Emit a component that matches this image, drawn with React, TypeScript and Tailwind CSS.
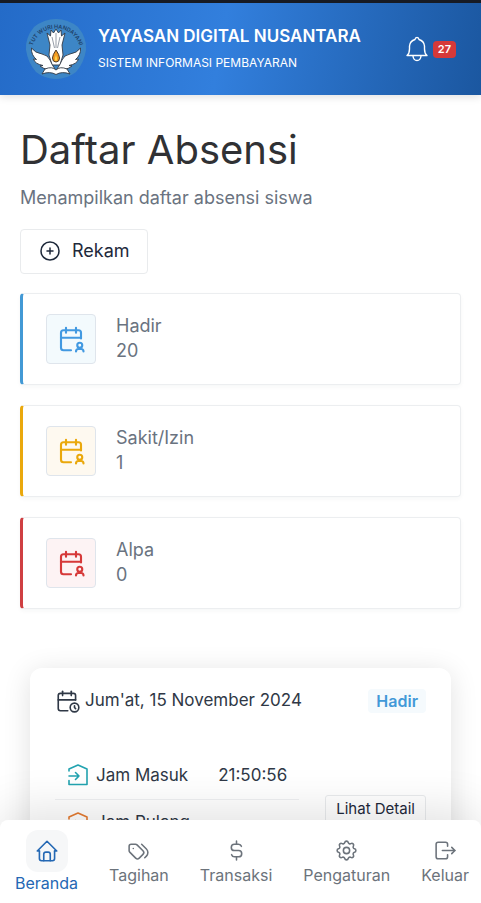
import type { ReactNode } from "react";
import {
  TbCalendarTime,
  TbCalendarUser,
  TbCirclePlus,
  TbCurrencyDollar,
  TbHome,
  TbLogout,
  TbSettings,
  TbTags,
} from "react-icons/tb";

function Emblem() {
  return (
    <svg viewBox="0 0 64 64" className="size-16 shrink-0" role="img" aria-label="Tut Wuri Handayani">
      <path
        d="M32 2Q44 2 54 10Q63 21 62 33Q60 46 52 55Q43 62 32 62Q21 62 12 55Q4 46 2 33Q1 21 10 10Q20 2 32 2Z"
        fill="#3d86c6"
      />
      <path id="motto" d="M8 31A24.500 24.500 0 0 1 56 31" fill="none" />
      <text fontSize="5.500" fontWeight="600" fill="#1d3f66" fontFamily="Inter, sans-serif">
        <textPath href="#motto" startOffset="50%" textAnchor="middle">
          TUT WURI HANDAYANI
        </textPath>
      </text>
      <g fill="#fff" stroke="#333a44" strokeWidth="0.900" strokeLinejoin="round">
        <path d="M25 38L26 28L23 16L26.500 19L27 13L29.500 16L32 12L34.500 16L37 13L37.500 19L41 16L38 28L39 38L36 48H28Z" />
        <path d="M31 52Q22 54 16 49L19 48.500Q11 47 9.500 42L12.500 42.500Q7 38 7.500 31Q11 36 18 37Q24 38 26 43Q28 48 31 52Z" />
        <path d="M33 52Q42 54 48 49L45 48.500Q53 47 54.500 42L51.500 42.500Q57 38 56.500 31Q53 36 46 37Q40 38 38 43Q36 48 33 52Z" />
        <path d="M18 57L21 52Q28 49 32 53Q36 49 43 52L46 57Q38 54 32 57.500Q26 54 18 57Z" />
      </g>
      <path d="M28 20L30.500 31M36 20L33.500 31M32 16V31" stroke="#7b8490" strokeWidth="0.800" />
      <path d="M32 33Q35.500 38 35.500 41Q35.500 45 32 45Q28.500 45 28.500 41Q28.500 38 32 33Z" fill="#f39a20" stroke="#4b3a28" strokeWidth="1" />
      <path d="M32 38Q33.500 41 33 43.500H31Q30.500 41 32 38Z" fill="#ffd54a" />
    </svg>
  );
}

function BellIcon() {
  return (
    <svg
      viewBox="0 0 24 26"
      className="h-[26px] w-6"
      fill="none"
      stroke="currentColor"
      strokeWidth="1.400"
      strokeLinecap="round"
      strokeLinejoin="round"
      aria-hidden="true"
    >
      <path d="M2 19.500Q4.500 17.500 4.500 13V10Q5 5 10 3.500Q10.200 1.500 12 1.500T14 3.500Q19 5 19.500 10V13Q19.500 17.500 22 19.500Z" />
      <path d="M8 20Q8.500 24.500 12 24.500T16 20" />
    </svg>
  );
}

function GateIcon({ className }: { className: string }) {
  return (
    <svg
      viewBox="0 0 22 24"
      className={`h-6 w-[22px] shrink-0 ${className}`}
      fill="none"
      stroke="currentColor"
      strokeWidth="1.600"
      strokeLinecap="round"
      strokeLinejoin="round"
      aria-hidden="true"
    >
      <path d="M2 8V6L11 2L20 6V21.500H2V17.500" />
      <path d="M2 13H12M8.500 9.500L12 13L8.500 16.500" />
    </svg>
  );
}

type Tone = { bar: string; tile: string };

const tones: Record<string, Tone> = {
  blue: { bar: "border-l-[#4299d5]", tile: "bg-[#f3fafd] text-[#4299e1]" },
  yellow: { bar: "border-l-[#eaa80c]", tile: "bg-[#fef9f0] text-[#eaa80c]" },
  red: { bar: "border-l-[#cf3f42]", tile: "bg-[#fdf3f4] text-[#d63939]" },
};

function StatCard({ label, value, tone }: { label: string; value: number; tone: Tone }) {
  return (
    <section
      className={`flex h-[92px] items-center gap-5 rounded-[4px] border border-l-[3px] border-[#eceef0] bg-white px-[23px] shadow-[0_2px_4px_rgba(30,41,59,0.04)] ${tone.bar}`}
    >
      <div className={`flex size-[50px] items-center justify-center rounded-[4px] border border-[#dfe5ec] ${tone.tile}`}>
        <TbCalendarUser size={30} strokeWidth={1.7} aria-hidden="true" />
      </div>
      <div className="pb-0.5 text-lg leading-[25px] text-[#6a7380]">
        <p>{label}</p>
        <p>{value}</p>
      </div>
    </section>
  );
}

function NavItem({ icon, label, active }: { icon: ReactNode; label: string; active?: boolean }) {
  return (
    <a
      href="#"
      aria-current={active ? "page" : undefined}
      className={`flex flex-col items-center ${active ? "pb-2.5 text-[#2468b4]" : "pb-[18px] text-[#6c737b]"}`}
    >
      <span className={active ? "mb-px rounded-xl bg-[#f6f7f8] p-2" : "mb-0.5"}>{icon}</span>
      <span className="text-base leading-5">{label}</span>
    </a>
  );
}

export default function App() {
  return (
    <div className="flex h-screen flex-col overflow-hidden bg-white font-[Inter,sans-serif]">
      <header className="relative z-10 flex h-[95px] shrink-0 items-center justify-between border-t-[3px] border-[#171b24] bg-[linear-gradient(100deg,#246bc8_0%,#327fdd_46%,#1b57a0_100%)] pr-[25px] pl-6 text-white shadow-[0_2px_8px_rgba(0,0,0,0.12)]">
        <div className="flex items-center gap-2.5">
          <Emblem />
          <div>
            <h2 className="text-[17px] leading-6 font-semibold">YAYASAN DIGITAL NUSANTARA</h2>
            <p className="mt-[3px] text-xs leading-6">SISTEM INFORMASI PEMBAYARAN</p>
          </div>
        </div>
        <button type="button" aria-label="27 notifikasi" className="flex items-center gap-1">
          <BellIcon />
          <span className="rounded-[4px] bg-[#d63939] px-[5px] text-[11px] leading-[17px] font-semibold">27</span>
        </button>
      </header>

      <main className="min-h-0 flex-1 overflow-y-auto px-5 pt-7 [scrollbar-width:none]">
        <h1 className="text-[40px] leading-[53px] font-normal text-[#303134]">Daftar Absensi</h1>
        <p className="mt-2.5 text-lg leading-6 text-[#6a7380]">Menampilkan daftar absensi siswa</p>
        <button
          type="button"
          className="mt-[19px] flex h-[45px] items-center gap-2.5 rounded-[4px] border border-[#e9ebed] bg-white px-[17px] pb-0.5 text-lg text-[#1e293b]"
        >
          <TbCirclePlus size={24} strokeWidth={1.5} aria-hidden="true" />
          Rekam
        </button>

        <div className="mt-[19px] flex flex-col gap-5">
          <StatCard label="Hadir" value={20} tone={tones.blue} />
          <StatCard label="Sakit/Izin" value={1} tone={tones.yellow} />
          <StatCard label="Alpa" value={0} tone={tones.red} />
        </div>

        <article className="mx-2.5 mt-[59px] mb-10 rounded-xl bg-white px-[25px] pt-[19px] pb-6 text-[17px] text-[#2f3846] shadow-[0_4px_28px_rgba(0,0,0,0.12)]">
          <div className="flex h-7 items-center justify-between">
            <h3 className="flex items-center gap-1">
              <TbCalendarTime size={26} strokeWidth={1.5} aria-hidden="true" />
              Jum'at, 15 November 2024
            </h3>
            <span className="rounded-[4px] bg-[#f5fafd] px-2 text-base leading-6 font-semibold text-[#4299d8]">Hadir</span>
          </div>
          <div className="mt-[37px] flex items-end justify-between">
            <table>
              <tbody>
                <tr className="h-[47px] border-b border-[#eff0f2]">
                  <th scope="row" className="pr-[30px] pl-3 text-left font-normal">
                    <span className="flex items-center gap-[7px]">
                      <GateIcon className="text-[#22a3b0]" />
                      Jam Masuk
                    </span>
                  </th>
                  <td className="pr-3">21:50:56</td>
                </tr>
                <tr className="h-[47px]">
                  <th scope="row" className="pl-3 text-left font-normal">
                    <span className="flex items-center gap-[7px]">
                      <GateIcon className="text-[#e67b30]" />
                      Jam Pulang
                    </span>
                  </th>
                  <td />
                </tr>
              </tbody>
            </table>
            <button
              type="button"
              className="mb-[23px] rounded-[3px] border border-[#e9ebed] bg-white px-2.5 text-[15px] leading-[26px] font-normal text-[#1e293b]"
            >
              Lihat Detail
            </button>
          </div>
        </article>
      </main>

      <nav
        aria-label="Menu utama"
        className="relative z-10 flex h-[83px] shrink-0 items-end justify-between rounded-t-lg bg-white pr-3 pl-[15px] shadow-[0_-8px_48px_rgba(0,0,0,0.12)]"
      >
        <NavItem active icon={<TbHome size={26} strokeWidth={1.5} />} label="Beranda" />
        <NavItem icon={<TbTags size={25} strokeWidth={1.5} />} label="Tagihan" />
        <NavItem icon={<TbCurrencyDollar size={25} strokeWidth={1.5} />} label="Transaksi" />
        <NavItem icon={<TbSettings size={25} strokeWidth={1.5} />} label="Pengaturan" />
        <NavItem icon={<TbLogout size={25} strokeWidth={1.5} />} label="Keluar" />
      </nav>
    </div>
  );
}
